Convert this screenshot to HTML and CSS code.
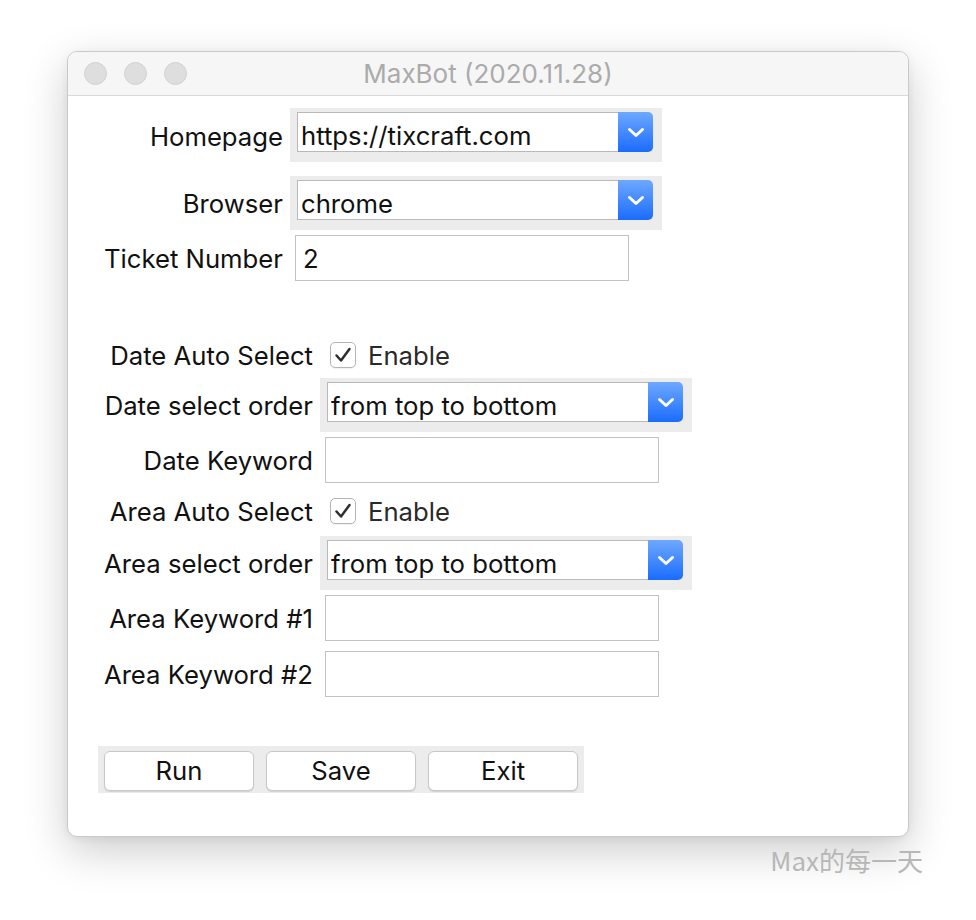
FILE: index.html
```html
<!DOCTYPE html>
<html>
<head>
    <title>MaxBot</title>
    <link rel="stylesheet" href="styles.css">
</head>
<body>
    <div class="desktop">
        <div class="window">
            <div class="titlebar">
                <div class="lights">
                    <span class="light"></span>
                    <span class="light"></span>
                    <span class="light"></span>
                </div>
                <div class="title">MaxBot (2020.11.28)</div>
                <div></div>
            </div>

            <div class="content">
                <div class="form form-top">
                    <div class="row">
                        <label class="lbl lbl-low">Homepage</label>
                        <div class="combo">
                            <div class="combo-value">https://tixcraft.com</div>
                            <div class="combo-btn">
                                <svg width="18" height="11" viewBox="0 0 18 11"><path d="M2.5 2.5 L9 8.5 L15.5 2.5" fill="none" stroke="#fff" stroke-width="3" stroke-linejoin="round" stroke-linecap="round"/></svg>
                            </div>
                        </div>
                    </div>
                    <div class="row row-browser">
                        <label class="lbl">Browser</label>
                        <div class="combo">
                            <div class="combo-value">chrome</div>
                            <div class="combo-btn">
                                <svg width="18" height="11" viewBox="0 0 18 11"><path d="M2.5 2.5 L9 8.5 L15.5 2.5" fill="none" stroke="#fff" stroke-width="3" stroke-linejoin="round" stroke-linecap="round"/></svg>
                            </div>
                        </div>
                    </div>
                    <div class="row row-gap5">
                        <label class="lbl">Ticket Number</label>
                        <div class="entry">2</div>
                    </div>
                </div>

                <div class="form form-bottom">
                    <div class="row row-check">
                        <label class="lbl">Date Auto Select</label>
                        <span class="check">
                            <svg width="18" height="16" viewBox="0 0 18 16"><path d="M2.5 8.5 L7 13.5 L15.5 2" fill="none" stroke="#2e2e2e" stroke-width="2.5" stroke-linejoin="round" stroke-linecap="round"/></svg>
                        </span>
                        <span class="check-text">Enable</span>
                    </div>
                    <div class="row">
                        <label class="lbl">Date select order</label>
                        <div class="combo">
                            <div class="combo-value">from top to bottom</div>
                            <div class="combo-btn">
                                <svg width="18" height="11" viewBox="0 0 18 11"><path d="M2.5 2.5 L9 8.5 L15.5 2.5" fill="none" stroke="#fff" stroke-width="3" stroke-linejoin="round" stroke-linecap="round"/></svg>
                            </div>
                        </div>
                    </div>
                    <div class="row row-gap5">
                        <label class="lbl">Date Keyword</label>
                        <div class="entry"></div>
                    </div>
                    <div class="row row-check row-gap5">
                        <label class="lbl">Area Auto Select</label>
                        <span class="check">
                            <svg width="18" height="16" viewBox="0 0 18 16"><path d="M2.5 8.5 L7 13.5 L15.5 2" fill="none" stroke="#2e2e2e" stroke-width="2.5" stroke-linejoin="round" stroke-linecap="round"/></svg>
                        </span>
                        <span class="check-text">Enable</span>
                    </div>
                    <div class="row row-gap2">
                        <label class="lbl">Area select order</label>
                        <div class="combo">
                            <div class="combo-value">from top to bottom</div>
                            <div class="combo-btn">
                                <svg width="18" height="11" viewBox="0 0 18 11"><path d="M2.5 2.5 L9 8.5 L15.5 2.5" fill="none" stroke="#fff" stroke-width="3" stroke-linejoin="round" stroke-linecap="round"/></svg>
                            </div>
                        </div>
                    </div>
                    <div class="row row-gap5">
                        <label class="lbl">Area Keyword #1</label>
                        <div class="entry"></div>
                    </div>
                    <div class="row row-gap10">
                        <label class="lbl">Area Keyword #2</label>
                        <div class="entry"></div>
                    </div>
                </div>

                <div class="buttons">
                    <button class="btn">Run</button>
                    <button class="btn">Save</button>
                    <button class="btn">Exit</button>
                </div>
            </div>
        </div>
        <div class="watermark">Max的每一天</div>
    </div>
</body>
</html>
```

FILE: styles.css
```css
body {
    margin: 0;
    background: #fff;
    font-family: "Inter", "Noto Sans", sans-serif;
}
.desktop {
    padding: 51px 0 0 67px;
    min-height: 920px;
    box-sizing: border-box;
}
.window {
    width: 842px;
    height: 786px;
    box-sizing: border-box;
    border: 1px solid #c9c9c9;
    border-radius: 10px;
    background: #fff;
    overflow: hidden;
    box-shadow: 0 14px 44px rgba(0, 0, 0, 0.2), 0 2px 8px rgba(0, 0, 0, 0.06);
}
.titlebar {
    height: 43px;
    background: #f6f6f6;
    border-bottom: 1px solid #d9d9d9;
    display: grid;
    grid-template-columns: 1fr auto 1fr;
    align-items: center;
}
.lights {
    display: flex;
    gap: 17px;
    padding-left: 16px;
}
.light {
    width: 23px;
    height: 23px;
    box-sizing: border-box;
    border-radius: 50%;
    background: #dedede;
    border: 1px solid #d2d2d2;
}
.title {
    font-size: 26px;
    color: #ababab;
}
.content {
    font-size: 25.7px;
    color: #111;
}
.row {
    display: flex;
    align-items: center;
}
.lbl {
    margin-right: 7px;
    text-align: right;
    flex: none;
}
.lbl-low {
    padding-top: 2px;
}
.form-top {
    margin-top: 12px;
}
.form-top .lbl {
    width: 215px;
}
.form-bottom {
    margin-top: 51px;
}
.form-bottom .lbl {
    width: 245px;
}
.row-browser {
    margin-top: 14px;
}
.row-gap2 {
    margin-top: 2px;
}
.row-gap5 {
    margin-top: 5px;
}
.row-gap10 {
    margin-top: 10px;
}
.row-check {
    height: 46px;
}
.combo {
    width: 372px;
    height: 54px;
    box-sizing: border-box;
    background: #ececec;
    padding: 4px 9px 10px 7px;
    display: flex;
}
.combo-value {
    flex: 1;
    background: #fff;
    border: 1px solid #b9b9b9;
    border-right: none;
    padding: 8px 0 0 3px;
    line-height: 30px;
    white-space: nowrap;
    overflow: hidden;
}
.combo-btn {
    width: 35px;
    height: 40px;
    border-radius: 0 5px 5px 0;
    background: linear-gradient(#6ea8ff, #1b6cfe);
    display: flex;
    align-items: center;
    justify-content: center;
}
.entry {
    width: 334px;
    height: 46px;
    box-sizing: border-box;
    margin-left: 5px;
    border: 1px solid #c2c2c2;
    padding: 1px 7px 0;
    line-height: 44px;
}
.check {
    width: 26px;
    height: 26px;
    box-sizing: border-box;
    margin-left: 10px;
    border: 1px solid #b5b5b5;
    border-radius: 5px;
    display: flex;
    align-items: center;
    justify-content: center;
    box-shadow: 0 1px 1px rgba(0, 0, 0, 0.06);
}
.check-text {
    margin-left: 12px;
    color: #2a2a2a;
}
.buttons {
    margin: 49px 0 0 30px;
    width: 486px;
    box-sizing: border-box;
    background: #ececec;
    padding: 5px 6px 2px 6px;
    display: flex;
    gap: 12px;
}
.btn {
    width: 150px;
    height: 40px;
    background: #fff;
    border: 1px solid #c8c8c8;
    border-radius: 6px;
    box-shadow: 0 1px 1px rgba(0, 0, 0, 0.12);
    font-family: "Inter", "Noto Sans", sans-serif;
    font-size: 25.7px;
    color: #111;
    padding: 0 0 1px;
}
.watermark {
    width: 856px;
    margin-top: 8px;
    text-align: right;
    font-family: "Noto Sans CJK SC", "Noto Sans", sans-serif;
    font-size: 26px;
    line-height: 30px;
    color: #b7b7b7;
}
```
